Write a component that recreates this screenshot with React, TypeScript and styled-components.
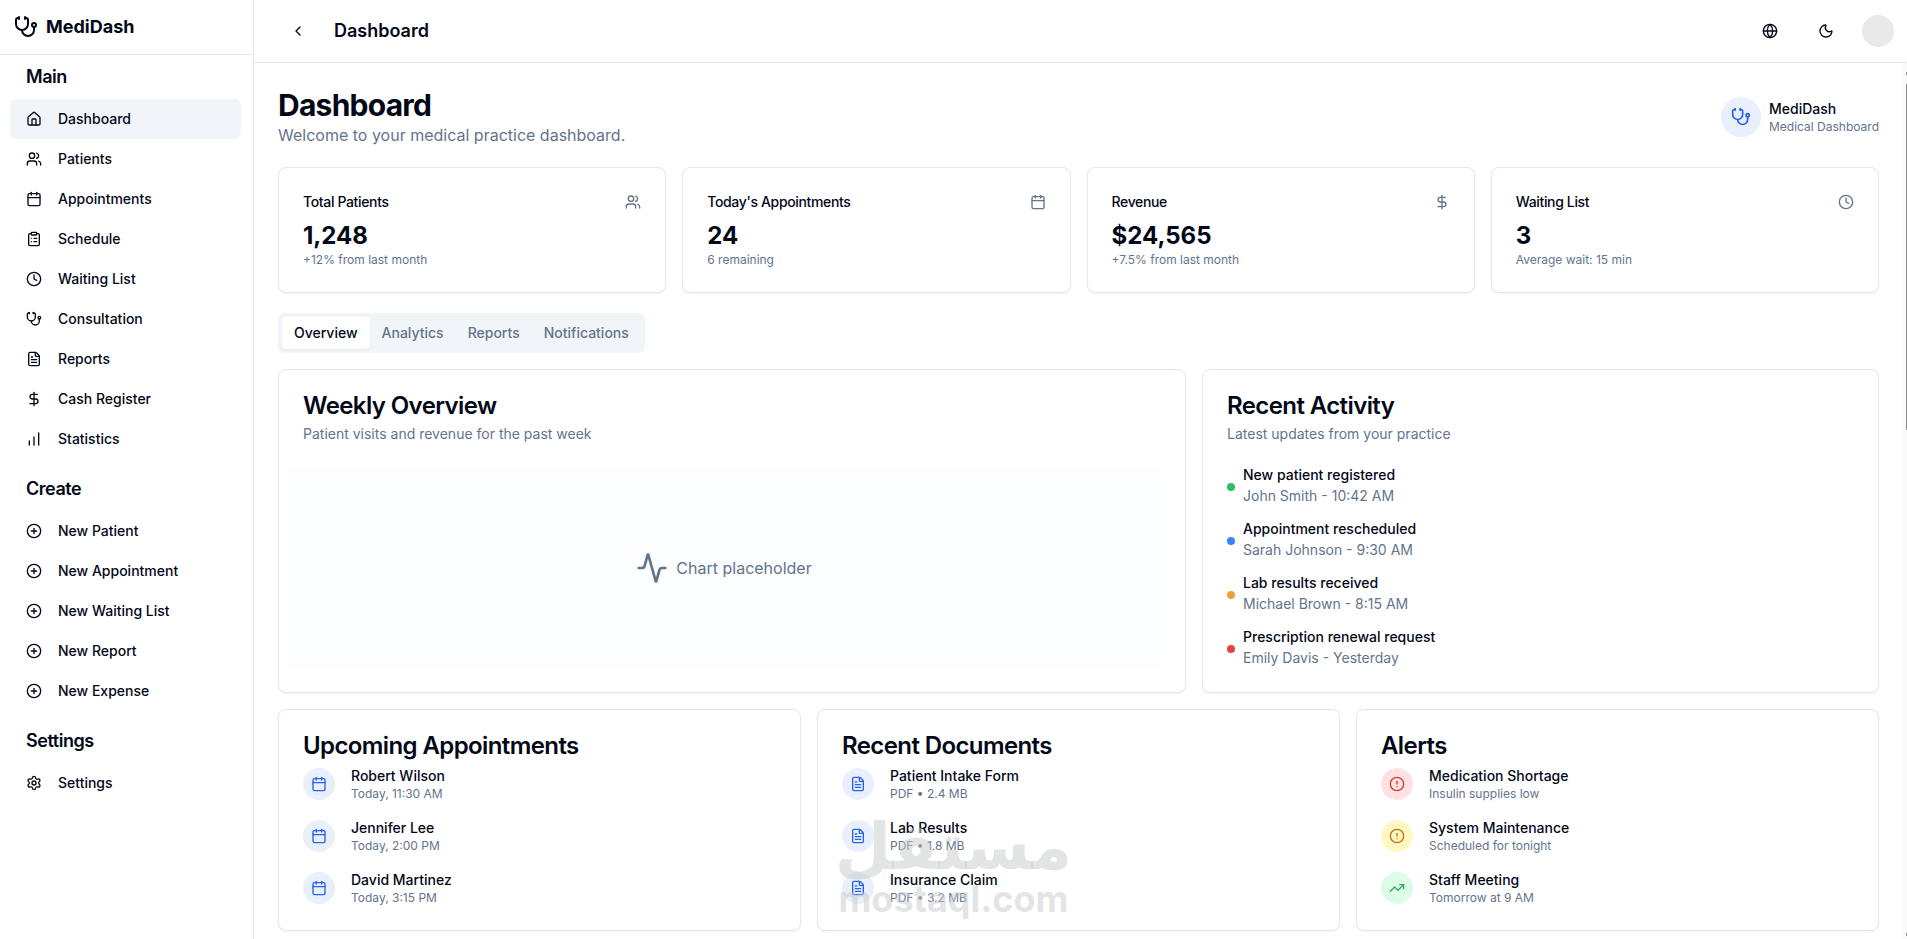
import React, { useState } from 'react';
import styled, { createGlobalStyle, ThemeProvider } from 'styled-components';
import {
  Activity,
  Calendar,
  ChartNoAxesColumnIncreasing,
  ChevronLeft,
  CircleAlert,
  CirclePlus,
  ClipboardList,
  Clock,
  DollarSign,
  FileText,
  Globe,
  House,
  Moon,
  Settings,
  Stethoscope,
  TrendingUp,
  Users,
  type LucideIcon,
} from 'lucide-react';

const theme = {
  text: '#020817',
  muted: '#64748b',
  border: '#e2e8f0',
  surface: '#f1f5f9',
  primary: '#2563eb',
  primarySoft: '#e9effd',
};

const GlobalStyle = createGlobalStyle`
  *, *::before, *::after { box-sizing: border-box; }
  body {
    margin: 0;
    background: #fff;
    color: #020817;
    font-family: Inter, "Liberation Sans", sans-serif;
    font-size: 14px;
    line-height: 20px;
  }
  h1, h2, h3, p, ul, dl, dd, dt { margin: 0; padding: 0; }
  ul { list-style: none; }
  a { color: inherit; text-decoration: none; }
  button { font: inherit; color: inherit; border: 0; background: none; padding: 0; cursor: pointer; }
  svg { display: block; flex: none; }
`;

const Shell = styled.div`
  position: relative;
  display: flex;
  min-height: 100vh;
`;

const Sidebar = styled.aside`
  width: 254px;
  flex: none;
  border-right: 1px solid ${p => p.theme.border};
`;

const Brand = styled.a`
  display: flex;
  align-items: center;
  gap: 8px;
  height: 55px;
  padding: 0 14px;
  border-bottom: 1px solid ${p => p.theme.border};
  font-size: 18px;
  line-height: 28px;
  font-weight: 700;
`;

const Nav = styled.nav`
  display: flex;
  flex-direction: column;
  gap: 16px;
  padding: 8px 12px 8px 10px;
`;

const NavHeading = styled.h2`
  margin-bottom: 8px;
  padding: 0 16px;
  font-size: 18px;
  line-height: 28px;
  font-weight: 600;
  letter-spacing: -0.025em;
`;

const NavLink = styled.a<{ $active?: boolean }>`
  display: flex;
  align-items: center;
  gap: 16px;
  height: 40px;
  padding: 0 16px;
  border-radius: 6px;
  font-weight: 500;
  background: ${p => (p.$active ? p.theme.surface : 'transparent')};
`;

const Page = styled.div`
  flex: 1;
  min-width: 0;
  display: flex;
  flex-direction: column;
`;

const TopBar = styled.header`
  display: flex;
  align-items: center;
  gap: 16px;
  height: 63px;
  padding: 0 13px 0 24px;
  border-bottom: 1px solid ${p => p.theme.border};
`;

const TopTitle = styled.p`
  flex: 1;
  font-size: 18px;
  line-height: 28px;
  font-weight: 600;
`;

const IconButton = styled.button`
  display: grid;
  place-items: center;
  width: 40px;
  height: 40px;
  border-radius: 6px;
`;

const Avatar = styled.button`
  width: 32px;
  height: 32px;
  border-radius: 50%;
  background: #e9e9e9;
`;

const Body = styled.div`
  flex: 1;
  display: flex;
`;

const Main = styled.main`
  flex: 1;
  min-width: 0;
  display: flex;
  flex-direction: column;
  gap: 20px;
  padding: 24px 24px 8px;
`;

const ScrollTrack = styled.div`
  display: flex;
  flex-direction: column;
  align-items: flex-end;
  justify-content: space-between;
  width: 4px;
  padding: 9px 0 3px;
  background: #fafafa;
`;

const ScrollArrow = styled.span`
  width: 1px;
  height: 3px;
  background: #8b8b8b;
`;

const ScrollThumb = styled.span`
  width: 1px;
  height: 40%;
  margin: 9px 0 auto;
  background: #8b8b8b;
`;

const Intro = styled.div`
  display: flex;
  align-items: center;
  justify-content: space-between;
`;

const PageTitle = styled.h1`
  font-size: 30px;
  line-height: 36px;
  font-weight: 700;
  letter-spacing: -0.025em;
`;

const Lead = styled.p`
  font-size: 16px;
  line-height: 24px;
  color: ${p => p.theme.muted};
`;

const Practice = styled.div`
  display: flex;
  align-items: center;
  gap: 8px;
`;

const Bubble = styled.span<{ $size: number; $bg?: string; $fg?: string }>`
  display: grid;
  place-items: center;
  flex: none;
  width: ${p => p.$size}px;
  height: ${p => p.$size}px;
  border-radius: 50%;
  background: ${p => p.$bg ?? p.theme.primarySoft};
  color: ${p => p.$fg ?? p.theme.primary};
`;

const ItemName = styled.p`
  font-weight: 500;
`;

const Caption = styled.p`
  font-size: 12px;
  line-height: 16px;
  color: ${p => p.theme.muted};
`;

const Grid = styled.div<{ $columns: string }>`
  display: grid;
  grid-template-columns: ${p => p.$columns};
  gap: 16px;
`;

const Card = styled.section<{ $span?: number }>`
  grid-column: span ${p => p.$span ?? 1};
  min-width: 0;
  padding: 24px;
  border: 1px solid ${p => p.theme.border};
  border-radius: 8px;
  background: #fff;
  box-shadow: 0 1px 2px rgba(0, 0, 0, 0.05);
`;

const StatHead = styled.div`
  display: flex;
  align-items: center;
  justify-content: space-between;
  margin-bottom: 8px;
  svg { color: ${p => p.theme.muted}; }
`;

const StatLabel = styled.h3`
  font-size: 14px;
  line-height: 20px;
  font-weight: 500;
  letter-spacing: -0.025em;
`;

const StatValue = styled.p`
  font-size: 24px;
  line-height: 32px;
  font-weight: 700;
`;

const TabArea = styled.div`
  display: flex;
  flex-direction: column;
  align-items: stretch;
  gap: 16px;
`;

const TabList = styled.div`
  display: flex;
  align-self: flex-start;
  padding: 4px;
  border-radius: 6px;
  background: ${p => p.theme.surface};
`;

const Tab = styled.button<{ $active: boolean }>`
  padding: 6px 12px;
  border-radius: 4px;
  font-weight: 500;
  color: ${p => (p.$active ? p.theme.text : p.theme.muted)};
  background: ${p => (p.$active ? '#fff' : 'transparent')};
  box-shadow: ${p => (p.$active ? '0 1px 2px rgba(0, 0, 0, 0.05)' : 'none')};
`;

const CardTitle = styled.h3`
  font-size: 24px;
  line-height: 24px;
  font-weight: 600;
  letter-spacing: -0.025em;
`;

const CardText = styled.p`
  margin: 6px 0 24px;
  color: ${p => p.theme.muted};
`;

const Chart = styled.div`
  display: flex;
  align-items: center;
  justify-content: center;
  gap: 8px;
  height: 200px;
  margin-left: -16px;
  border-radius: 6px;
  background: #fcfdfe;
  font-size: 16px;
  line-height: 24px;
  color: ${p => p.theme.muted};
`;

const List = styled.ul<{ $top?: number }>`
  display: flex;
  flex-direction: column;
  gap: 16px;
  margin-top: ${p => p.$top ?? 0}px;
`;

const Row = styled.li<{ $gap: number }>`
  display: flex;
  align-items: center;
  gap: ${p => p.$gap}px;
`;

const Dot = styled.span<{ $color: string }>`
  width: 8px;
  height: 8px;
  border-radius: 50%;
  background: ${p => p.$color};
`;

const EventName = styled.p`
  margin-bottom: 4px;
  line-height: 14px;
  font-weight: 500;
`;

const EventDetail = styled.p`
  color: ${p => p.theme.muted};
`;

const Watermark = styled.div`
  position: absolute;
  left: 0;
  right: 0;
  bottom: 16px;
  display: flex;
  flex-direction: column;
  align-items: center;
  color: rgba(200, 202, 202, 0.5);
  font-weight: 700;
  pointer-events: none;
`;

const WatermarkArabic = styled.span`
  font-family: "DejaVu Sans", sans-serif;
  font-size: 65px;
  line-height: 56px;
`;

const WatermarkLatin = styled.span`
  font-size: 36px;
  line-height: 48px;
`;

type Link = { label: string; icon: LucideIcon };

const sections: { title: string; links: Link[] }[] = [
  {
    title: 'Main',
    links: [
      { label: 'Dashboard', icon: House },
      { label: 'Patients', icon: Users },
      { label: 'Appointments', icon: Calendar },
      { label: 'Schedule', icon: ClipboardList },
      { label: 'Waiting List', icon: Clock },
      { label: 'Consultation', icon: Stethoscope },
      { label: 'Reports', icon: FileText },
      { label: 'Cash Register', icon: DollarSign },
      { label: 'Statistics', icon: ChartNoAxesColumnIncreasing },
    ],
  },
  {
    title: 'Create',
    links: ['New Patient', 'New Appointment', 'New Waiting List', 'New Report', 'New Expense'].map(
      label => ({ label, icon: CirclePlus }),
    ),
  },
  { title: 'Settings', links: [{ label: 'Settings', icon: Settings }] },
];

const stats = [
  { label: 'Total Patients', value: '1,248', note: '+12% from last month', icon: Users },
  { label: "Today's Appointments", value: '24', note: '6 remaining', icon: Calendar },
  { label: 'Revenue', value: '$24,565', note: '+7.5% from last month', icon: DollarSign },
  { label: 'Waiting List', value: '3', note: 'Average wait: 15 min', icon: Clock },
];

const tabs = ['Overview', 'Analytics', 'Reports', 'Notifications'];

const events = [
  { name: 'New patient registered', detail: 'John Smith - 10:42 AM', color: '#2fbe63' },
  { name: 'Appointment rescheduled', detail: 'Sarah Johnson - 9:30 AM', color: '#3b82f6' },
  { name: 'Lab results received', detail: 'Michael Brown - 8:15 AM', color: '#e9a23b' },
  { name: 'Prescription renewal request', detail: 'Emily Davis - Yesterday', color: '#e5423f' },
];

type Entry = { name: string; note: string; icon: LucideIcon; bg?: string; fg?: string };

const panels: { title: string; entries: Entry[] }[] = [
  {
    title: 'Upcoming Appointments',
    entries: [
      { name: 'Robert Wilson', note: 'Today, 11:30 AM', icon: Calendar },
      { name: 'Jennifer Lee', note: 'Today, 2:00 PM', icon: Calendar },
      { name: 'David Martinez', note: 'Today, 3:15 PM', icon: Calendar },
    ],
  },
  {
    title: 'Recent Documents',
    entries: [
      { name: 'Patient Intake Form', note: 'PDF • 2.4 MB', icon: FileText },
      { name: 'Lab Results', note: 'PDF • 1.8 MB', icon: FileText },
      { name: 'Insurance Claim', note: 'PDF • 3.2 MB', icon: FileText },
    ],
  },
  {
    title: 'Alerts',
    entries: [
      { name: 'Medication Shortage', note: 'Insulin supplies low', icon: CircleAlert, bg: '#fee2e2', fg: '#dc3a2e' },
      { name: 'System Maintenance', note: 'Scheduled for tonight', icon: CircleAlert, bg: '#fef9c3', fg: '#c96f12' },
      { name: 'Staff Meeting', note: 'Tomorrow at 9 AM', icon: TrendingUp, bg: '#dcfce7', fg: '#2fae63' },
    ],
  },
];

export default function App() {
  const [tab, setTab] = useState('Overview');

  return (
    <ThemeProvider theme={theme}>
      <GlobalStyle />
      <Shell>
        <Sidebar>
          <Brand href="#home">
            <Stethoscope size={24} />
            MediDash
          </Brand>
          <Nav>
            {sections.map(section => (
              <div key={section.title}>
                <NavHeading>{section.title}</NavHeading>
                {section.links.map(({ label, icon: Icon }) => (
                  <NavLink key={label} href="#" $active={label === 'Dashboard'}>
                    <Icon size={16} />
                    {label}
                  </NavLink>
                ))}
              </div>
            ))}
          </Nav>
        </Sidebar>

        <Page>
          <TopBar>
            <IconButton aria-label="Back">
              <ChevronLeft size={16} />
            </IconButton>
            <TopTitle>Dashboard</TopTitle>
            <IconButton aria-label="Language">
              <Globe size={16} />
            </IconButton>
            <IconButton aria-label="Toggle theme">
              <Moon size={16} />
            </IconButton>
            <Avatar aria-label="Account" />
          </TopBar>

          <Body>
            <Main>
              <Intro>
                <div>
                  <PageTitle>Dashboard</PageTitle>
                  <Lead>Welcome to your medical practice dashboard.</Lead>
                </div>
                <Practice>
                  <Bubble $size={40}>
                    <Stethoscope size={20} />
                  </Bubble>
                  <div>
                    <ItemName>MediDash</ItemName>
                    <Caption>Medical Dashboard</Caption>
                  </div>
                </Practice>
              </Intro>

              <Grid $columns="repeat(4, 1fr)">
                {stats.map(({ label, value, note, icon: Icon }) => (
                  <Card key={label}>
                    <StatHead>
                      <StatLabel>{label}</StatLabel>
                      <Icon size={16} />
                    </StatHead>
                    <StatValue>{value}</StatValue>
                    <Caption>{note}</Caption>
                  </Card>
                ))}
              </Grid>

              <TabArea>
                <TabList role="tablist">
                  {tabs.map(name => (
                    <Tab
                      key={name}
                      role="tab"
                      aria-selected={tab === name}
                      $active={tab === name}
                      onClick={() => setTab(name)}
                    >
                      {name}
                    </Tab>
                  ))}
                </TabList>

                <Grid $columns="repeat(7, 1fr)">
                  <Card $span={4}>
                    <CardTitle>Weekly Overview</CardTitle>
                    <CardText>Patient visits and revenue for the past week</CardText>
                    <Chart>
                      <Activity size={32} />
                      Chart placeholder
                    </Chart>
                  </Card>
                  <Card $span={3}>
                    <CardTitle>Recent Activity</CardTitle>
                    <CardText>Latest updates from your practice</CardText>
                    <List>
                      {events.map(event => (
                        <Row key={event.name} $gap={8}>
                          <Dot $color={event.color} />
                          <div>
                            <EventName>{event.name}</EventName>
                            <EventDetail>{event.detail}</EventDetail>
                          </div>
                        </Row>
                      ))}
                    </List>
                  </Card>
                </Grid>

                <Grid $columns="repeat(3, 1fr)">
                  {panels.map(panel => (
                    <Card key={panel.title}>
                      <CardTitle>{panel.title}</CardTitle>
                      <List $top={8}>
                        {panel.entries.map(({ name, note, icon: Icon, bg, fg }) => (
                          <Row key={name} $gap={16}>
                            <Bubble $size={32} $bg={bg} $fg={fg}>
                              <Icon size={16} />
                            </Bubble>
                            <div>
                              <ItemName>{name}</ItemName>
                              <Caption>{note}</Caption>
                            </div>
                          </Row>
                        ))}
                      </List>
                    </Card>
                  ))}
                </Grid>
              </TabArea>
            </Main>
            <ScrollTrack aria-hidden="true">
              <ScrollArrow />
              <ScrollThumb />
              <ScrollArrow />
            </ScrollTrack>
          </Body>
        </Page>

        <Watermark aria-hidden="true">
          <WatermarkArabic lang="ar">مستقل</WatermarkArabic>
          <WatermarkLatin>mostaql.com</WatermarkLatin>
        </Watermark>
      </Shell>
    </ThemeProvider>
  );
}
